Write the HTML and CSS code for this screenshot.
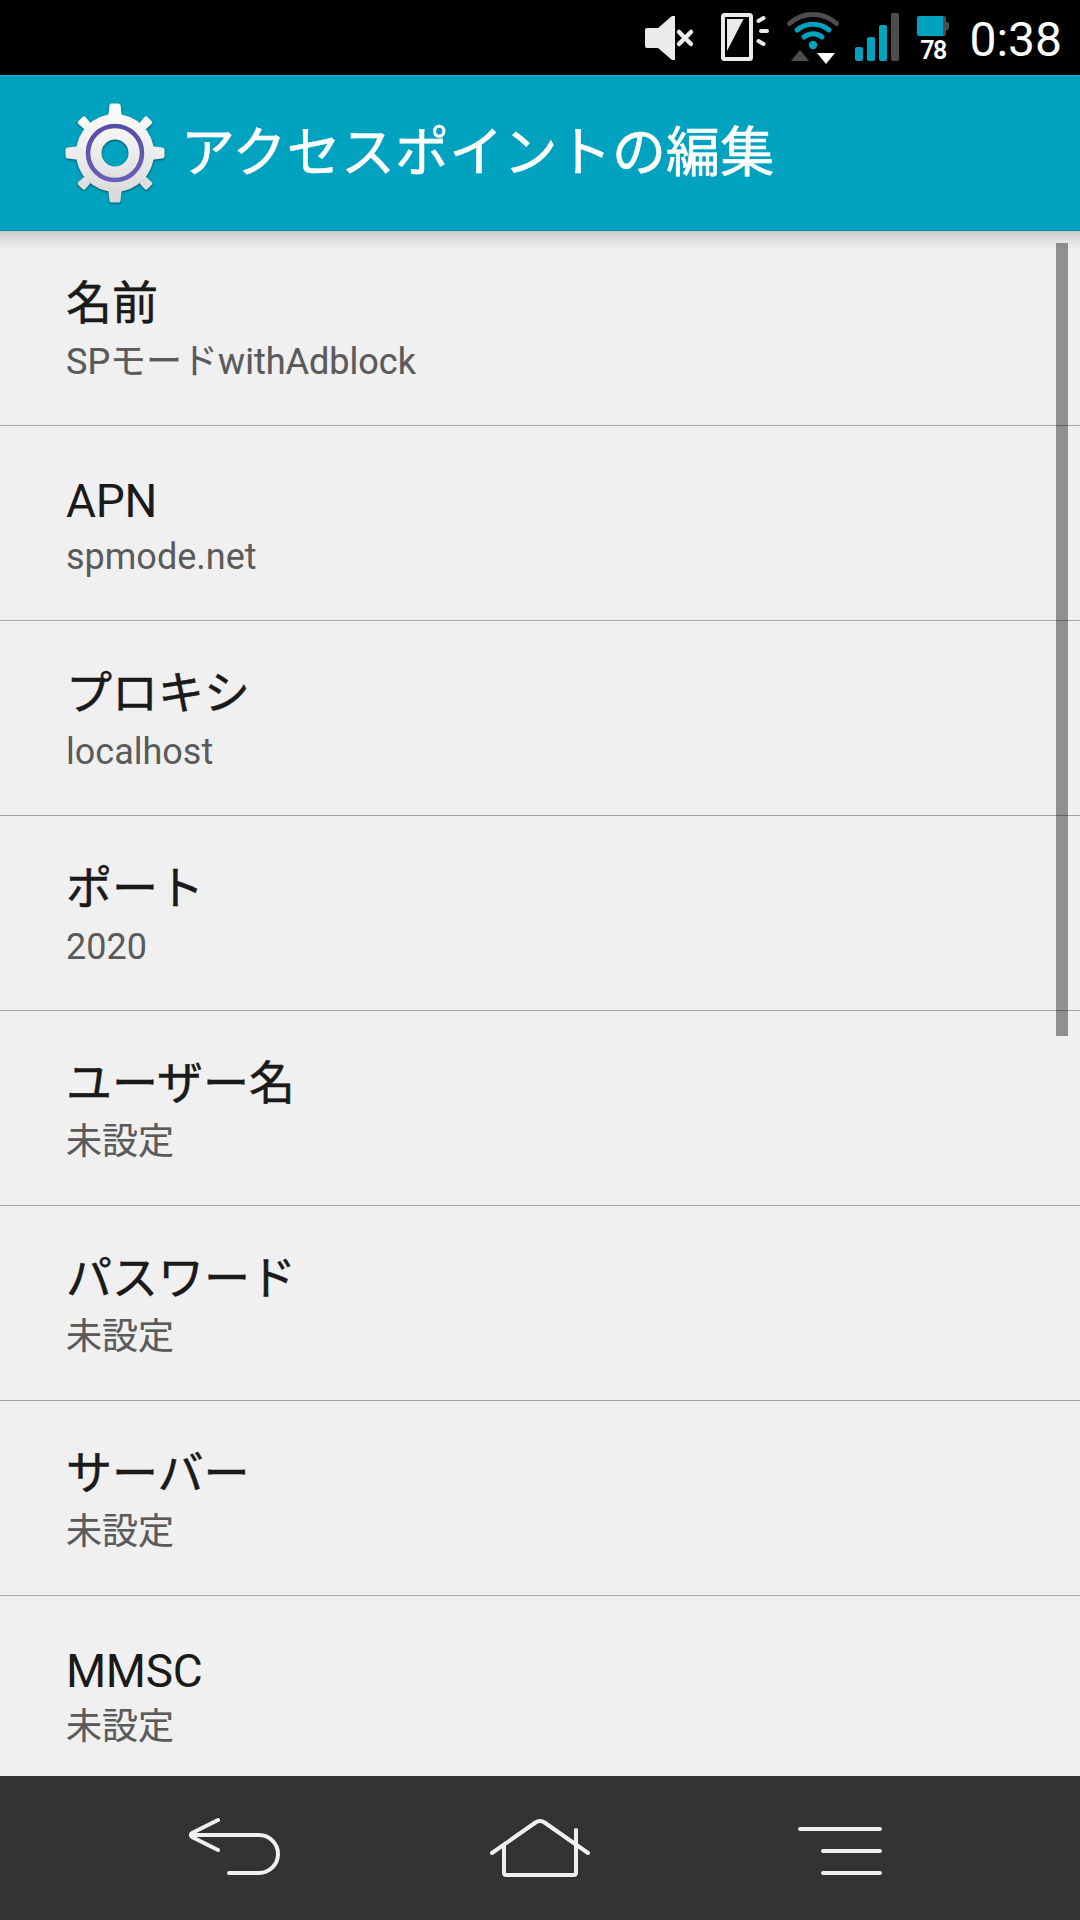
FILE: index.html
```
<!DOCTYPE html>
<html lang="ja">
<head>
    <meta charset="UTF-8">
    <meta name="viewport" content="width=device-width, initial-scale=1.0">
    <title>アクセスポイントの編集</title>
    <link rel="stylesheet" href="styles.css">
</head>
<body>
    <div class="screen">
        <div class="status-bar">
            <!-- mute -->
            <svg width="70" height="75" viewBox="640 0 70 75">
                <path d="M647 28h11l14-12h3v44h-3l-14-12h-11q-2 0-2-2v-16q0-2 2-2z" fill="#ebebeb"/>
                <path d="M679 32l12 12M691 32l-12 12" stroke="#ebebeb" stroke-width="4.5" stroke-linecap="round"/>
            </svg>
            <!-- vibrate / flash -->
            <svg width="70" height="75" viewBox="710 0 70 75">
                <rect x="723" y="15" width="28" height="44" rx="1.5" fill="none" stroke="#ebebeb" stroke-width="4"/>
                <path d="M727 19h16.500l-16.500 32z" fill="#ebebeb"/>
                <path d="M758.500 21l5-3M761 31h6M758.500 41l5 3" stroke="#ebebeb" stroke-width="4" stroke-linecap="round"/>
            </svg>
            <!-- wifi -->
            <svg width="70" height="75" viewBox="780 0 70 75">
                <g fill="none" stroke-width="5" stroke-linecap="round">
                    <path d="M789.500 23.500a35 35 0 0 1 47 0" stroke="#4d4d4d"/>
                    <path d="M797 30a25 25 0 0 1 32 0" stroke="#00a2bf"/>
                    <path d="M804 37a14.500 14.500 0 0 1 18 0" stroke="#00a2bf"/>
                </g>
                <circle cx="813" cy="45" r="4.200" fill="#00a2bf"/>
                <path d="M791 61l9-11 9 11z" fill="#4d4d4d"/>
                <path d="M817 53h18l-9 11z" fill="#fff"/>
            </svg>
            <!-- signal -->
            <svg width="60" height="75" viewBox="850 0 60 75">
                <rect x="855" y="47" width="8" height="14" rx="2" fill="#00a2bf"/>
                <rect x="867" y="37" width="8" height="24" rx="2" fill="#00a2bf"/>
                <rect x="879" y="25" width="8" height="36" rx="2" fill="#00a2bf"/>
                <rect x="891" y="13" width="8" height="48" rx="2" fill="#4d4d4d"/>
            </svg>
            <div class="battery">
                <svg width="32" height="20" viewBox="0 0 32 20">
                    <path d="M24 0h3q2 0 2 2v4h1q2 0 2 2v4q0 2-2 2h-1v4q0 2-2 2h-3z" fill="#4d4d4d"/>
                    <path d="M2 0h24v20H2q-2 0-2-2V2q0-2 2-2z" fill="#00a2bf"/>
                </svg>
                <span class="battery-level">78</span>
            </div>
            <span class="clock">0:38</span>
        </div>

        <div class="action-bar">
            <svg class="gear" width="104" height="104" viewBox="-52 -52 104 104">
                <defs>
                    <linearGradient id="gearFill" x1="0" y1="-50" x2="0" y2="50" gradientUnits="userSpaceOnUse">
                        <stop offset="0" stop-color="#fff"/>
                        <stop offset="0.5" stop-color="#ececec"/>
                        <stop offset="1" stop-color="#d6d6d6"/>
                    </linearGradient>
                    <linearGradient id="ringStroke" x1="0" y1="0" x2="0" y2="1">
                        <stop offset="0" stop-color="#554ea6"/>
                        <stop offset="1" stop-color="#6a5fb8"/>
                    </linearGradient>
                    <path id="tooth" d="M-7-35l1.500-13q.3-1.500 2-1.500h7q1.700 0 2 1.500l1.500 13z"/>
                </defs>
                <g fill="url(#gearFill)">
                    <use href="#tooth"/>
                    <path d="M24.500-30l5-6q1-1 2.500-.5l5 5q.8 1.500-.3 2.600l-6.200 5.400z"/>
                    <path d="M24.500 30l5 6q1 1 2.500 .5l5-5q.8-1.500-.3-2.600l-6.200-5.400z"/>
                    <path d="M-24.500-30l-5-6q-1-1-2.500-.5l-5 5q-.8 1.500 .3 2.600l6.200 5.400z"/>
                    <path d="M-24.500 30l-5 6q-1 1-2.500 .5l-5-5q-.8-1.500 .3-2.600l6.200-5.400z"/>
                    <path d="M35-7l12.500 1.500q2 .3 2 2v7q0 1.700-2 2l-12.500 1.500z"/>
                    <path d="M-35-7l-12.500 1.500q-2 .3-2 2v7q0 1.700 2 2l12.500 1.500z"/>
                    <path d="M-7 35l1.500 13q.3 1.500 2 1.500h7q1.700 0 2-1.500l1.500-13z"/>
                    <path d="M0-39a39 39 0 1 1 0 78a39 39 0 1 1 0-78zM0-13.500a13.500 13.500 0 1 0 0 27a13.500 13.500 0 1 0 0-27z" fill-rule="evenodd"/>
                </g>
                <circle r="27" fill="none" stroke="url(#ringStroke)" stroke-width="4.6"/>
            </svg>
            <h1>アクセスポイントの編集</h1>
        </div>

        <div class="list">
            <div class="item">
                <div class="title">名前</div>
                <div class="summary">SPモードwithAdblock</div>
            </div>
            <div class="item">
                <div class="title latin">APN</div>
                <div class="summary latin">spmode.net</div>
            </div>
            <div class="item">
                <div class="title">プロキシ</div>
                <div class="summary latin">localhost</div>
            </div>
            <div class="item">
                <div class="title">ポート</div>
                <div class="summary latin">2020</div>
            </div>
            <div class="item">
                <div class="title">ユーザー名</div>
                <div class="summary">未設定</div>
            </div>
            <div class="item">
                <div class="title">パスワード</div>
                <div class="summary">未設定</div>
            </div>
            <div class="item">
                <div class="title">サーバー</div>
                <div class="summary">未設定</div>
            </div>
            <div class="item">
                <div class="title latin">MMSC</div>
                <div class="summary">未設定</div>
            </div>
            <div class="scrollbar"></div>
        </div>

        <div class="nav-bar">
            <!-- back -->
            <svg width="300" height="144" viewBox="90 1776 300 144">
                <path d="M218 1820l-25.500 12.700q-3.500 2.300 0 4.600l25.500 12.700M191 1835h68a19 19 0 0 1 0 38h-30"/>
            </svg>
            <!-- home -->
            <svg width="300" height="144" viewBox="390 1776 300 144">
                <path d="M492 1853l43.500-30.500q4.500-3 9 0l43.500 30.500M504 1846v26.500q0 2.500 2.500 2.500h67q2.500 0 2.500-2.500v-42.500"/>
            </svg>
            <!-- menu -->
            <svg width="300" height="144" viewBox="690 1776 300 144">
                <path d="M800 1829h80M823 1851h57M823 1873h57"/>
            </svg>
        </div>
    </div>
</body>
</html>
```
FILE: styles.css
```
body {
    margin: 0;
    background-color: #f0f0f0;
    font-family: Roboto, "Noto Sans CJK JP", sans-serif;
}

.screen {
    display: flex;
    flex-direction: column;
    width: 1080px;
    height: 1920px;
    overflow: hidden;
}

.status-bar {
    display: flex;
    justify-content: flex-end;
    flex: none;
    box-sizing: border-box;
    height: 75px;
    padding-right: 18px;
    background-color: #000;
    color: #fff;
}

.battery {
    display: flex;
    flex-direction: column;
    align-items: center;
    width: 32px;
    margin: 16px 20px 0 7px;
}

.battery-level {
    margin-top: 3px;
    font-size: 25px;
    font-weight: 600;
    line-height: 24px;
    letter-spacing: -1.5px;
}

.clock {
    width: 93px;
    font-size: 48px;
    line-height: 79px;
    text-align: right;
}

.action-bar {
    display: flex;
    align-items: center;
    flex: none;
    box-sizing: border-box;
    height: 156px;
    padding-left: 63px;
    background-color: #00a2bf;
    border-top: 1px solid #33b4cb;
    border-bottom: 1px solid #0086a3;
    color: #fff;
}

.gear {
    flex: none;
    filter: drop-shadow(0 1px 1px rgba(0, 0, 0, 0.5));
}

h1 {
    margin: 2px 0 0 14px;
    font-size: 54px;
    font-weight: 400;
    line-height: 80px;
    letter-spacing: 0.2px;
    white-space: nowrap;
    -webkit-text-stroke: 0.6px #fff;
}

.list {
    position: relative;
    flex: 1;
    min-height: 0;
    overflow: hidden;
    background: linear-gradient(#c8c8c8, #d9d9d9 6px, #e8e8e8 13px, #f0f0f0 20px);
}

.item {
    box-sizing: border-box;
    height: 195px;
    padding: 42px 66px 0;
    border-bottom: 1px solid #a6a6a6;
}

.title {
    height: 62px;
    color: #1a1a1a;
    font-size: 46px;
    line-height: 60px;
    -webkit-text-stroke: 0.5px #1a1a1a;
}

.title.latin {
    padding-top: 3px;
    height: 59px;
    letter-spacing: -0.3px;
    -webkit-text-stroke: 0;
}

.summary {
    color: #5a5a5a;
    font-size: 36px;
    line-height: 54px;
    -webkit-text-stroke: 0.2px #5a5a5a;
}

.summary.latin {
    -webkit-text-stroke: 0;
}

.scrollbar {
    position: absolute;
    top: 12px;
    right: 12px;
    width: 12px;
    height: 793px;
    background-color: rgba(0, 0, 0, 0.4);
}

.nav-bar {
    display: flex;
    justify-content: center;
    flex: none;
    height: 144px;
    background-color: #333;
}

.nav-bar svg {
    fill: none;
    stroke: #f0f0f0;
    stroke-width: 4;
    stroke-linecap: round;
    stroke-linejoin: round;
}
```
